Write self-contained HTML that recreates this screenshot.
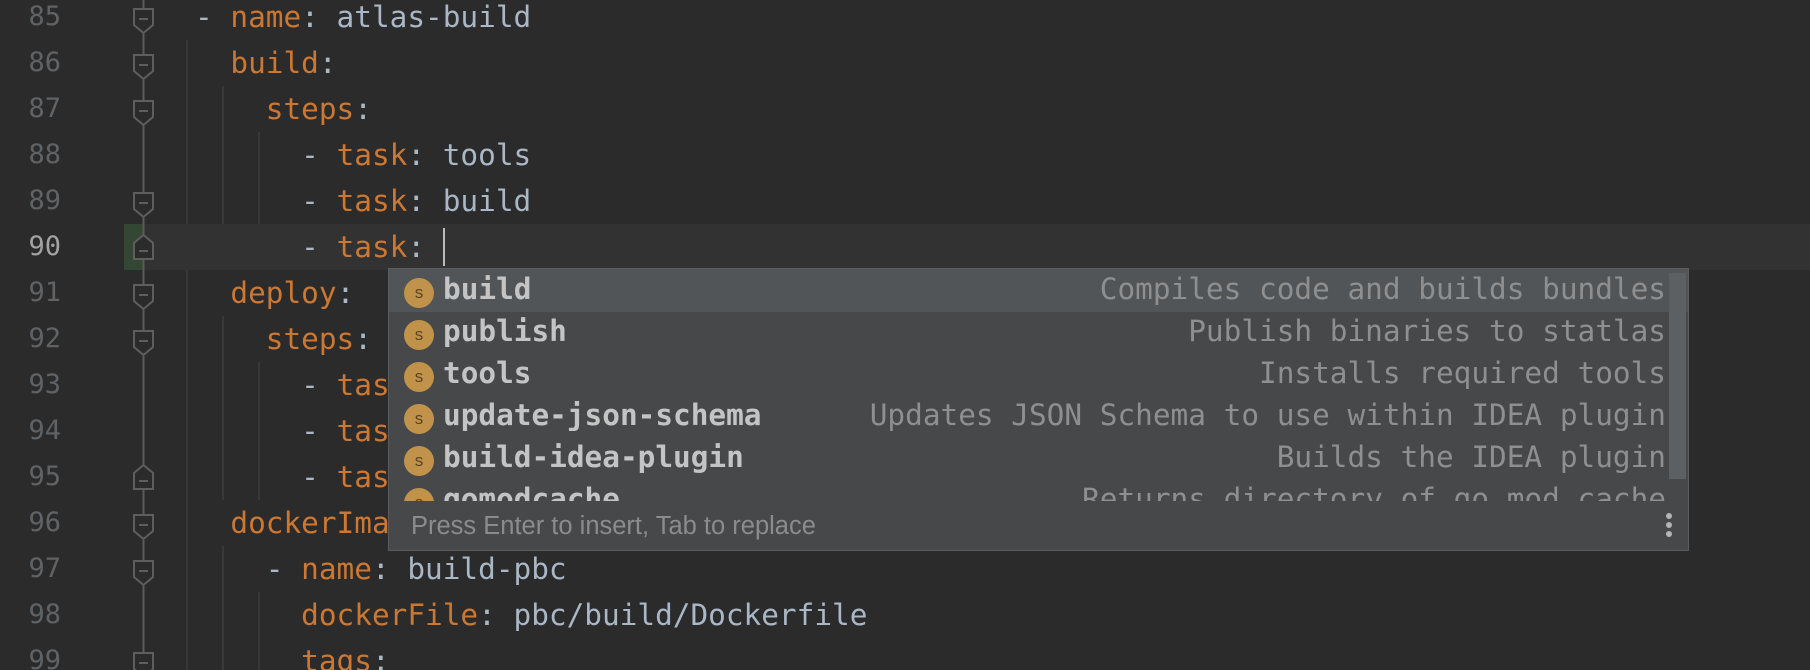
<!DOCTYPE html>
<html><head><meta charset="utf-8"><style>
html,body{margin:0;padding:0;background:#2b2b2b;width:1810px;height:670px;overflow:hidden;position:relative}
.ln{position:absolute;left:0;width:61px;text-align:right;font:27px "DejaVu Sans Mono","Liberation Mono",monospace;color:#606366;height:46px;line-height:46px}
.code{position:absolute;left:195px;font:29.4px "DejaVu Sans Mono","Liberation Mono",monospace;color:#a9b7c6;height:46px;line-height:46px;white-space:pre}
.k{color:#cc7832}
.g{position:absolute;width:2px;background:#383838}
.pop{position:absolute;left:388px;top:268px;width:1299px;height:281px;background:#46484a;border:1px solid #5a5c5e;overflow:hidden}
.row{position:absolute;left:0;width:1280px;height:42px;line-height:42px;font:bold 29.4px "DejaVu Sans Mono","Liberation Mono",monospace;color:#c4c4c4}
.row .t{position:absolute;left:54px}
.row .d{position:absolute;right:3px;font-weight:normal;color:#8f8f8f}
.row .i{position:absolute;left:15px;top:6px;width:30px;height:30px;border-radius:50%;background:#c0924a;color:#5a4420;font:17px "Liberation Sans",sans-serif;text-align:center;line-height:29px}
</style></head><body>
<div style="position:absolute;left:143px;top:224px;width:1667px;height:46px;background:#323232"></div>
<div style="position:absolute;left:124px;top:224px;width:19px;height:46px;background:#344734"></div>
<div class="g" style="left:186px;top:40px;height:184px"></div>
<div class="g" style="left:186px;top:270px;height:400px"></div>
<div class="g" style="left:222px;top:86px;height:138px"></div>
<div class="g" style="left:222px;top:316px;height:184px"></div>
<div class="g" style="left:222px;top:546px;height:124px"></div>
<div class="g" style="left:258px;top:132px;height:92px"></div>
<div class="g" style="left:258px;top:362px;height:138px"></div>
<div class="g" style="left:258px;top:592px;height:78px"></div>

<svg style="position:absolute;left:0;top:0" width="200" height="670">
<defs>
<g id="dn"><path d="M134 15H153V31L143.5 39L134 31Z"/><line x1="139" y1="25" x2="148" y2="25"/></g>
<g id="up"><path d="M134 35H153V19L143.5 11L134 19Z"/><line x1="139" y1="27" x2="148" y2="27"/></g>
</defs>
<line x1="143.5" y1="0" x2="143.5" y2="670" stroke="#5b5b5b" stroke-width="2"/>
<g fill="#2b2b2b" stroke="#5e5e5e" stroke-width="2">
<use href="#dn" y="-6"/>
<use href="#dn" y="40"/>
<use href="#dn" y="86"/>
<use href="#dn" y="178"/>
<use href="#dn" y="270"/>
<use href="#dn" y="316"/>
<use href="#dn" y="500"/>
<use href="#dn" y="546"/>
<use href="#dn" y="638"/>
<use href="#up" y="224"/>
<use href="#up" y="454"/>
</g></svg>

<div class="ln" style="top:-6px">85</div>
<div class="ln" style="top:40px">86</div>
<div class="ln" style="top:86px">87</div>
<div class="ln" style="top:132px">88</div>
<div class="ln" style="top:178px">89</div>
<div class="ln" style="top:224px;color:#a4a3a3">90</div>
<div class="ln" style="top:270px">91</div>
<div class="ln" style="top:316px">92</div>
<div class="ln" style="top:362px">93</div>
<div class="ln" style="top:408px">94</div>
<div class="ln" style="top:454px">95</div>
<div class="ln" style="top:500px">96</div>
<div class="ln" style="top:546px">97</div>
<div class="ln" style="top:592px">98</div>
<div class="ln" style="top:638px">99</div>

<div class="code" style="top:-6px">- <span class="k">name</span>: atlas-build</div>
<div class="code" style="top:40px">  <span class="k">build</span>:</div>
<div class="code" style="top:86px">    <span class="k">steps</span>:</div>
<div class="code" style="top:132px">      - <span class="k">task</span>: tools</div>
<div class="code" style="top:178px">      - <span class="k">task</span>: build</div>
<div class="code" style="top:224px">      - <span class="k">task</span>: </div>
<div style="position:absolute;left:443px;top:228px;width:2px;height:38px;background:#bbbbbb"></div>
<div class="code" style="top:270px">  <span class="k">deploy</span>:</div>
<div class="code" style="top:316px">    <span class="k">steps</span>:</div>
<div class="code" style="top:362px">      - <span class="k">task</span>: publish</div>
<div class="code" style="top:408px">      - <span class="k">task</span>: publish</div>
<div class="code" style="top:454px">      - <span class="k">task</span>: publish</div>
<div class="code" style="top:500px">  <span class="k">dockerImages</span>:</div>
<div class="code" style="top:546px">    - <span class="k">name</span>: build-pbc</div>
<div class="code" style="top:592px">      <span class="k">dockerFile</span>: pbc/build/Dockerfile</div>
<div class="code" style="top:638px">      <span class="k">tags</span>:</div>

<div class="pop">
 <div style="position:absolute;left:0;top:0;width:1299px;height:232px;overflow:hidden">
  <div style="position:absolute;left:0;top:0;width:1299px;height:43px;background:#515558"></div>
  <div class="row" style="top:3px"><span class="i">s</span><span class="t">build</span><span class="d">Compiles code and builds bundles</span></div>
  <div class="row" style="top:45px"><span class="i">s</span><span class="t">publish</span><span class="d">Publish binaries to statlas</span></div>
  <div class="row" style="top:87px"><span class="i">s</span><span class="t">tools</span><span class="d">Installs required tools</span></div>
  <div class="row" style="top:129px"><span class="i">s</span><span class="t">update-json-schema</span><span class="d">Updates JSON Schema to use within IDEA plugin</span></div>
  <div class="row" style="top:171px"><span class="i">s</span><span class="t">build-idea-plugin</span><span class="d">Builds the IDEA plugin</span></div>
  <div class="row" style="top:213px"><span class="i">s</span><span class="t">gomodcache</span><span class="d">Returns directory of go mod cache</span></div>
  <div style="position:absolute;left:1280px;top:4px;width:17px;height:206px;background:#5d6063"></div>
 </div>
 <div style="position:absolute;left:22px;top:241px;font:25.5px 'Liberation Sans',sans-serif;color:#8c8c8c;line-height:32px">Press Enter to insert, Tab to replace</div>
 <svg style="position:absolute;left:1272px;top:240px" width="16" height="34"><g fill="#b5b5b5"><circle cx="8" cy="7" r="3"/><circle cx="8" cy="16" r="3"/><circle cx="8" cy="25" r="3"/></g></svg>
</div>
</body></html>
